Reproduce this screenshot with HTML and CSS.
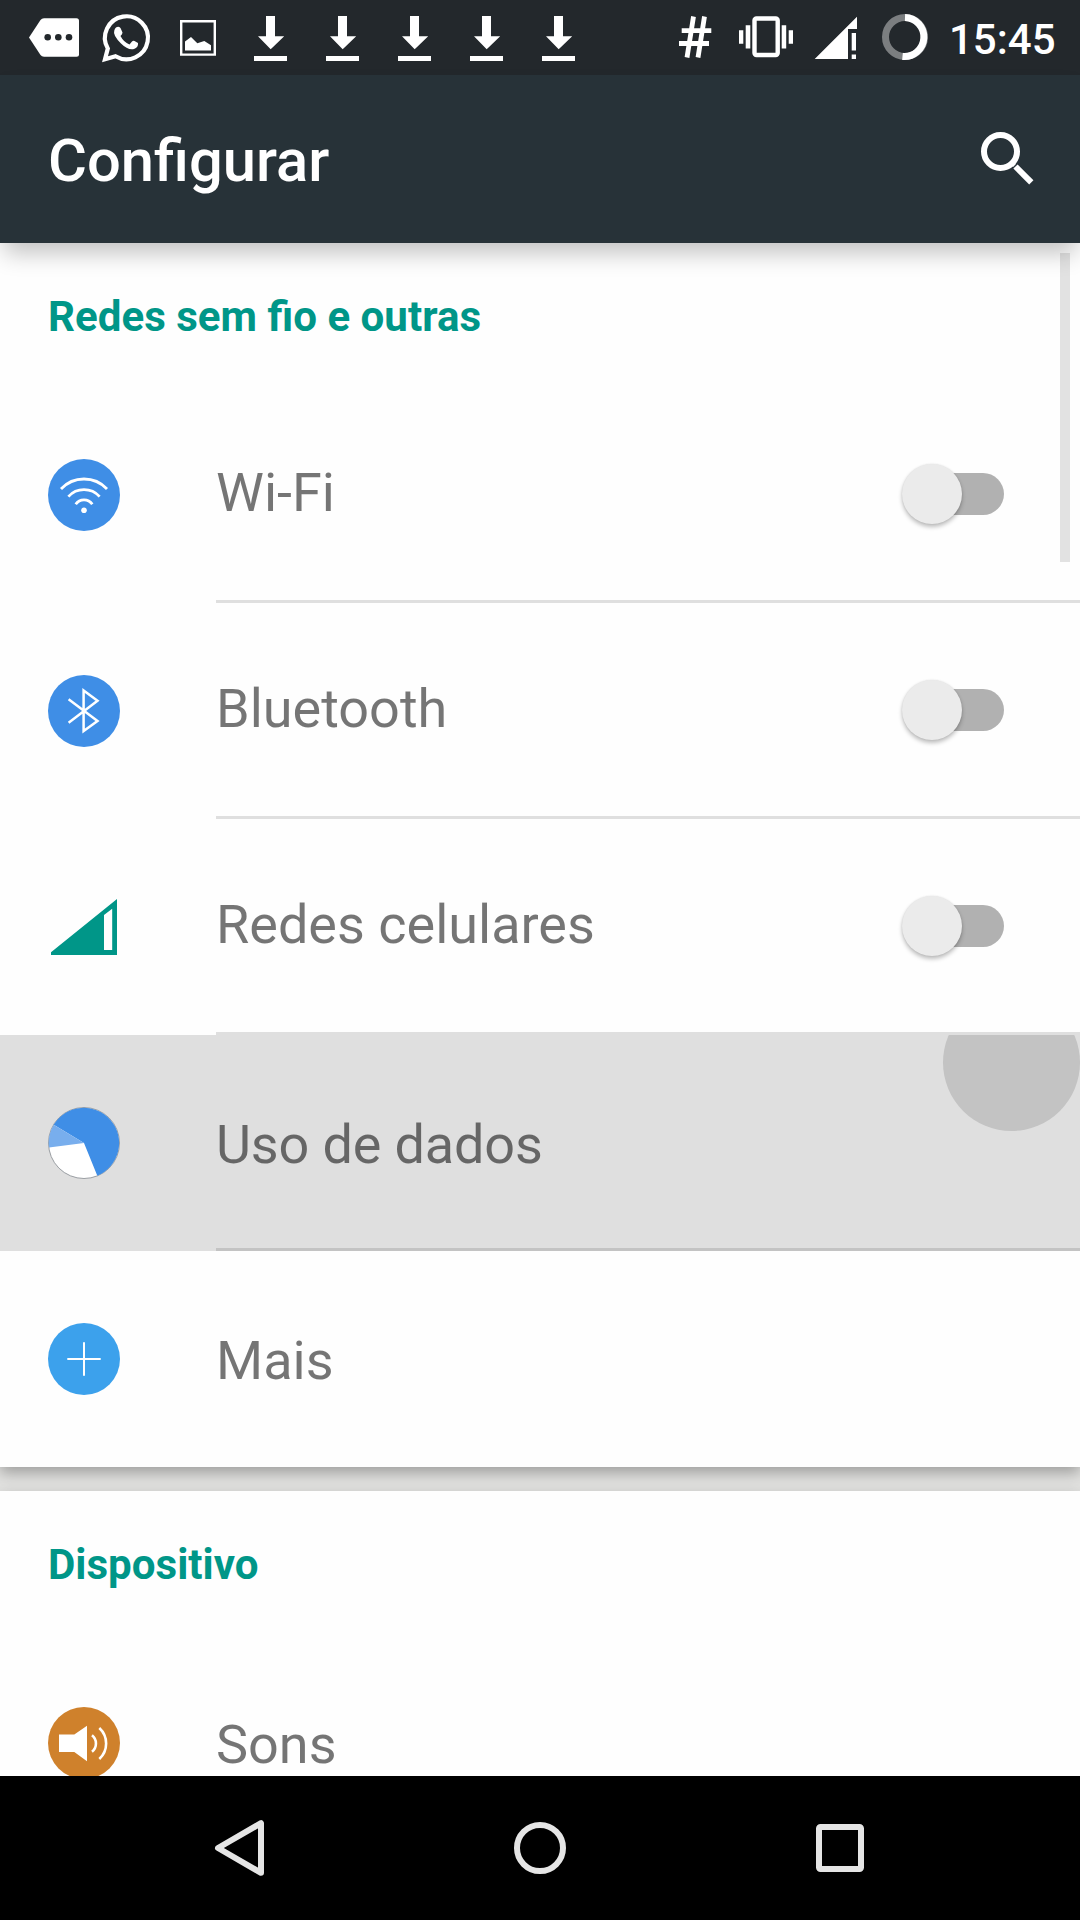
FILE: index.html
```html
<!DOCTYPE html>
<html lang="pt-BR">
<head>
    <meta charset="UTF-8">
    <title>Configurar</title>
    <link rel="stylesheet" href="styles.css">
</head>
<body>
<svg class="defs">
    <symbol id="download" viewBox="0 0 72 75">
        <path d="M32 16h9v20.300h9.200L36.700 49.200 24 36.300h8zM20 56h33v5H20z" fill="#fff"/>
    </symbol>
</svg>
<div id="wrap">
    <div class="status">
        <svg class="note" viewBox="0 0 72 75">
            <path d="M11 37.500L22.500 20Q23.700 18.300 26 18.300H58.500Q61 18.300 61 20.800V54.200Q61 56.700 58.500 56.700H26Q23.700 56.700 22.500 55z" fill="#fff"/>
            <circle class="hole" cx="29.700" cy="37.300" r="3.300"/>
            <circle class="hole" cx="40.300" cy="37.300" r="3.300"/>
            <circle class="hole" cx="51" cy="37.300" r="3.300"/>
        </svg>
        <svg class="note" viewBox="0 0 72 75">
            <path d="M17.800 48.500A21.500 21.500 0 1 1 25.500 56.300L15 59.300z" fill="none" stroke="#fff" stroke-width="4.200"/>
            <path d="M26 27.500Q28.500 26 30.500 28L32.500 32.500Q32.500 34 30.500 36Q33.500 42 39.500 44.500L42 41.600Q43 40.500 44.500 41L48 43Q48.500 47.500 44 49Q38 50.500 31 43.500Q22.500 35 24.300 30.500Q24.800 28.500 26 27.500z" fill="#fff"/>
        </svg>
        <svg class="note" viewBox="0 0 72 75">
            <path d="M19.200 21.200h33.600v33.400H19.200z" fill="none" stroke="#fff" stroke-width="2.400"/>
            <path d="M23 50.400V41.500L29 37l6.300 6.300 7-2.300 6.700 4.200v5.200z" fill="#fff"/>
        </svg>
        <svg class="note"><use href="#download"/></svg>
        <svg class="note"><use href="#download"/></svg>
        <svg class="note"><use href="#download"/></svg>
        <svg class="note"><use href="#download"/></svg>
        <svg class="note"><use href="#download"/></svg>
        <div class="system">
            <svg viewBox="0 0 70 75">
                <path d="M33.500 16.500L27 57.500M44.500 16.500L38 57.500M21.700 30.700H51.300M19 43.500H49" fill="none" stroke="#fff" stroke-width="4.800"/>
            </svg>
            <svg viewBox="0 0 70 75">
                <rect x="24.500" y="18.500" width="23.200" height="36.500" rx="2" fill="none" stroke="#fff" stroke-width="4.400"/>
                <path d="M15.700 25.300h4.600v23.300h-4.600zM9 30.300h4.300v13.400H9zM51.700 25.300H56.200v23.300h-4.500zM58.700 30.300H63v13.400h-4.300z" fill="#fff"/>
            </svg>
            <svg viewBox="0 0 70 75">
                <path d="M14.700 59L57 16.700V29H48v30zM51.700 33h4.300v17.500h-4.300zM51.700 54.500h4.300V59h-4.300z" fill="#fff"/>
            </svg>
            <svg viewBox="0 0 70 75">
                <circle cx="35" cy="37" r="19.500" fill="none" stroke="#7b7e80" stroke-width="7"/>
                <path d="M35 17.500A19.500 19.500 0 1 1 32.500 56.400" fill="none" stroke="#fff" stroke-width="7"/>
            </svg>
            <span class="clock">15:45</span>
        </div>
    </div>
    <div class="toolbar">
        <h1>Configurar</h1>
        <svg class="search" viewBox="0 0 72 72">
            <circle cx="28.500" cy="28.500" r="16.500" fill="none" stroke="#fff" stroke-width="6"/>
            <path d="M40 40L42.500 42.500" stroke="#fff" stroke-width="4"/>
            <path d="M43.500 43.500L59.300 59.300" stroke="#fff" stroke-width="6"/>
        </svg>
    </div>

    <div class="content">
        <div class="scrollbar"></div>
        <div class="card">
            <h2>Redes sem fio e outras</h2>
            <ul>
                <li class="has-switch">
                    <svg class="icon" viewBox="0 0 72 72">
                        <circle cx="36" cy="36" r="36" fill="#3f8ee6"/>
                        <path d="M13 30A31.500 31.500 0 0 1 59 30M20.400 37.600A21 21 0 0 1 51.600 37.600M27.700 45.300A10 10 0 0 1 44.300 45.300" fill="none" stroke="#fff" stroke-width="2.800"/>
                        <circle cx="36" cy="51.300" r="2.800" fill="#fff"/>
                    </svg>
                    <div class="label"><span>Wi-Fi</span><i class="switch"></i></div>
                </li>
                <li class="has-switch">
                    <svg class="icon" viewBox="0 0 72 72">
                        <circle cx="36" cy="36" r="36" fill="#3f8ee6"/>
                        <path d="M20.600 24.300L49.500 46 35.600 56V15.500L49.500 25.700 20.600 47.700" fill="none" stroke="#fff" stroke-width="2.500"/>
                    </svg>
                    <div class="label"><span>Bluetooth</span><i class="switch"></i></div>
                </li>
                <li class="has-switch">
                    <svg class="icon" viewBox="0 0 72 72">
                        <path d="M3 61.300L69 8v56H3zM56 24v35h8.200V17.700z" fill="#009688" fill-rule="evenodd"/>
                    </svg>
                    <div class="label"><span>Redes celulares</span><i class="switch"></i></div>
                </li>
                <li class="pressed">
                    <i class="ripple"></i>
                    <svg class="icon" viewBox="0 0 72 72">
                        <circle cx="36" cy="36" r="35.500" fill="#fff" stroke="#9a9ea3"/>
                        <path d="M36 36L5.700 17.700A35.300 35.300 0 1 1 49.300 68.700z" fill="#3f8ee6"/>
                        <path d="M36 36L5.700 17.700A35.300 35.300 0 0 0 1 40.500z" fill="#78aeed"/>
                    </svg>
                    <div class="label"><span>Uso de dados</span></div>
                </li>
                <li>
                    <svg class="icon" viewBox="0 0 72 72">
                        <circle cx="36" cy="36" r="36" fill="#3ca1ec"/>
                        <path d="M19.300 36H52.700M36 19.300V52.700" stroke="#fff" stroke-width="2"/>
                    </svg>
                    <div class="label"><span>Mais</span></div>
                </li>
            </ul>
        </div>
        <div class="card">
            <h2>Dispositivo</h2>
            <ul>
                <li>
                    <svg class="icon" viewBox="0 0 72 72">
                        <circle cx="36" cy="36" r="36" fill="#cf812c"/>
                        <path d="M11 27.500H26.300L39 18.700V54.300L26.300 45H11z" fill="#fff"/>
                        <path d="M44 28.300A10.500 10.500 0 0 1 44 44.700M51.300 21A21 21 0 0 1 51.300 52" fill="none" stroke="#fff" stroke-width="2.600"/>
                    </svg>
                    <div class="label"><span>Sons</span></div>
                </li>
            </ul>
        </div>
    </div>

    <div class="nav">
        <svg viewBox="0 0 72 72">
            <path d="M14 36L57 11.200V60.800z" fill="none" stroke="#e5e5e5" stroke-width="6" stroke-linejoin="round"/>
        </svg>
        <svg viewBox="0 0 72 72">
            <circle cx="36" cy="36" r="23" fill="none" stroke="#e5e5e5" stroke-width="6"/>
        </svg>
        <svg viewBox="0 0 72 72">
            <rect x="15" y="15" width="42" height="42" rx="1.500" fill="none" stroke="#e5e5e5" stroke-width="6"/>
        </svg>
    </div>
</div>
</body>
</html>
```
FILE: styles.css
```css
* {
    margin: 0;
    padding: 0;
    list-style: none;
    box-sizing: border-box;
}

body {
    font-family: Roboto, "Noto Sans", sans-serif;
}

.defs {
    display: none;
}

#wrap {
    width: 1080px;
    height: 1920px;
    display: flex;
    flex-direction: column;
    overflow: hidden;
    background: #e2e2e0;
}

/* status bar */
.status {
    flex: none;
    height: 75px;
    padding-left: 18px;
    display: flex;
    background: #23282c;
}

.note {
    width: 72px;
    height: 75px;
}

.hole {
    fill: #23282c;
}

.system {
    display: flex;
    margin-left: 66px;
}

.system svg {
    width: 70px;
    height: 75px;
}

.clock {
    margin-left: 9px;
    line-height: 79px;
    font-size: 42px;
    font-weight: 500;
    color: #fff;
}

/* toolbar */
.toolbar {
    flex: none;
    height: 168px;
    padding: 0 36px 0 48px;
    display: flex;
    align-items: center;
    justify-content: space-between;
    background: #273238;
    box-shadow: 0 14px 22px -4px rgba(0, 0, 0, .24);
    position: relative;
    z-index: 2;
}

.toolbar h1 {
    padding-top: 3px;
    font-size: 59.7px;
    font-weight: 500;
    color: #fff;
}

.search {
    width: 72px;
    height: 72px;
}

/* list */
.content {
    flex: 1;
    min-height: 0;
    overflow: hidden;
    position: relative;
}

.scrollbar {
    position: absolute;
    top: 10px;
    right: 10px;
    width: 10px;
    height: 309px;
    background: rgba(0, 0, 0, .11);
    z-index: 1;
}

.card {
    margin-bottom: 24px;
    background: #fefefe;
    box-shadow: 0 6px 14px rgba(0, 0, 0, .3);
}

.card h2 {
    height: 144px;
    padding-left: 48px;
    line-height: 148px;
    font-size: 42.1px;
    font-weight: 700;
    color: #009688;
}

.card li {
    height: 216px;
    padding-left: 48px;
    display: flex;
    align-items: center;
    position: relative;
    overflow: hidden;
}

.icon {
    width: 72px;
    height: 72px;
    margin-right: 96px;
    position: relative;
}

.label {
    flex: 1;
    height: 216px;
    padding: 6px 76px 0 0;
    display: flex;
    align-items: center;
    justify-content: space-between;
    border-bottom: 3px solid rgba(0, 0, 0, .12);
    font-size: 54px;
    color: rgba(0, 0, 0, .54);
}

.card li:last-child .label {
    border-bottom-color: transparent;
}

.has-switch .label {
    padding-top: 0;
    padding-bottom: 2px;
}

.switch {
    width: 96px;
    height: 42px;
    margin-top: 3px;
    border-radius: 21px;
    background: #b1b1b1;
    position: relative;
}

.switch::before {
    content: "";
    position: absolute;
    left: -6px;
    top: -9px;
    width: 60px;
    height: 60px;
    border-radius: 50%;
    background: #ebebeb;
    box-shadow: 0 3px 4px rgba(0, 0, 0, .25), 0 0 2px rgba(0, 0, 0, .1);
}

.pressed {
    background: #dfdfdf;
}

.pressed .label {
    letter-spacing: -.15px;
}

.ripple {
    position: absolute;
    left: 943px;
    top: -41px;
    width: 137px;
    height: 137px;
    border-radius: 50%;
    background: #c3c3c3;
}

/* navigation bar */
.nav {
    flex: none;
    height: 144px;
    padding: 0 90px;
    display: flex;
    align-items: center;
    justify-content: space-around;
    background: #000;
    position: relative;
}

.nav svg {
    width: 72px;
    height: 72px;
}
```
